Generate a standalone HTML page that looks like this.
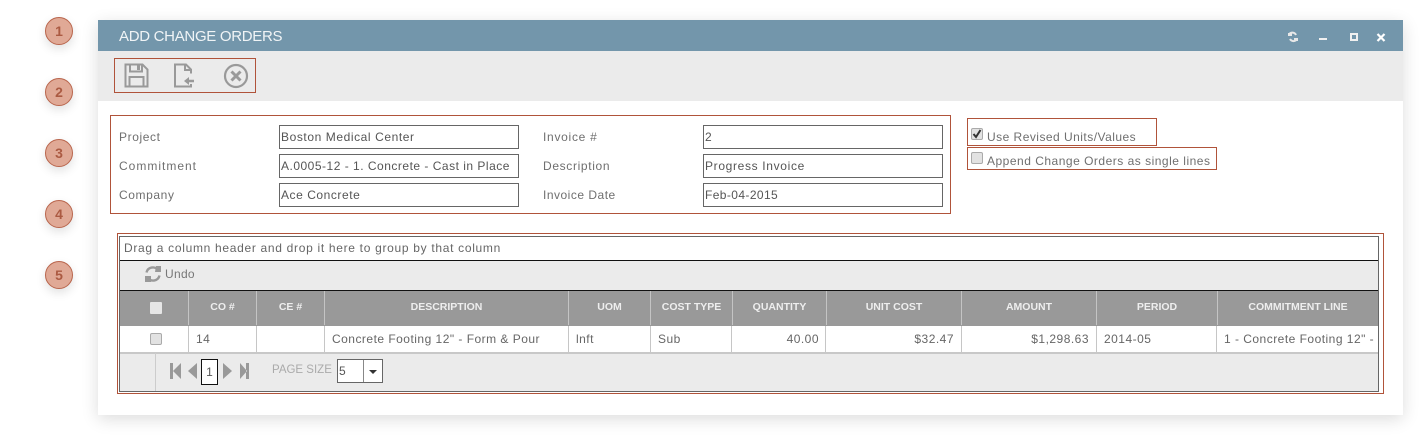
<!DOCTYPE html>
<html><head><meta charset="utf-8"><style>
html,body{margin:0;padding:0;background:#fff;width:1422px;height:438px;overflow:hidden}
body{position:relative;font-family:"Liberation Sans",sans-serif;font-size:12px;color:#666}
.a{position:absolute;box-sizing:border-box}
.t{position:absolute;white-space:nowrap;letter-spacing:.72px;line-height:16px;color:#6f6f6f}
.r{border:1px solid #b0533a}
.n{position:absolute;left:45px;width:28px;height:28px;box-sizing:border-box;border-radius:50%;background:#e0a996;border:1px solid #b9654c;color:#ab5a42;text-align:center;font-size:14px;font-weight:bold;line-height:26px;box-shadow:0 4px 10px rgba(0,0,0,.12)}
.i{position:absolute;box-sizing:border-box;width:240px;height:24px;border:1px solid #666;background:#fff;padding-left:1px;line-height:22px;color:#555;letter-spacing:.55px;white-space:nowrap;overflow:hidden}
.h{position:absolute;top:291px;height:34px;line-height:33px;text-align:center;color:#eee;font-size:10.500px;font-weight:bold;border-left:1px solid #c4c4c4;box-sizing:border-box;letter-spacing:0}
.c{position:absolute;top:326px;height:27px;line-height:26px;border-left:1px solid #c6c6c6;box-sizing:border-box;color:#666;letter-spacing:.48px;padding:0 7px;white-space:nowrap;overflow:hidden}
.cb{position:absolute;width:12px;height:12px;box-sizing:border-box;border:1px solid #aaa;border-radius:2px;background:#e2e2e2}
</style></head><body>
<div class="n" style="top:17px">1</div>
<div class="n" style="top:78px">2</div>
<div class="n" style="top:139px">3</div>
<div class="n" style="top:200px">4</div>
<div class="n" style="top:261px">5</div>

<div class="a" style="left:98px;top:20px;width:1305px;height:395px;background:#fff;box-shadow:0 4px 16px rgba(0,0,0,.14)"></div>
<div class="a" style="left:98px;top:20px;width:1305px;height:31px;background:#7396ab"></div>
<div class="t" style="left:119px;top:29px;font-size:15px;color:#f0f4f6;letter-spacing:-.3px">ADD CHANGE ORDERS</div>
<svg class="a" style="left:1285px;top:28px" width="105" height="16" viewBox="0 0 105 16">
<path d="M4 6.500A4 4 0 0 1 11 7M12 11A4 4 0 0 1 5 11" fill="none" stroke="#e8e8e8" stroke-width="2"/>
<path d="M3 5h4v3h-4zM9 10h4v3h-4z" fill="#e8e8e8"/>
<rect x="34" y="10" width="8" height="2" fill="#f0f0f0"/>
<rect x="66" y="6" width="6" height="6" fill="none" stroke="#f0f0f0" stroke-width="2"/>
<path d="M92.500 6l7 7M99.500 6l-7 7" stroke="#fff" stroke-width="2.200"/>
</svg>

<div class="a" style="left:98px;top:51px;width:1305px;height:50px;background:#ebebeb"></div>
<div class="a r" style="left:114px;top:58px;width:142px;height:35px"></div>
<svg class="a" style="left:114px;top:58px" width="142" height="35" viewBox="0 0 142 35" fill="none" stroke="#999">
<path d="M11.500 6.500h17l5 5v17h-22z" stroke-width="2"/>
<path d="M16 6.500v7h12v-7" stroke-width="2"/><rect x="23" y="7" width="3" height="5" fill="#999" stroke="none"/>
<path d="M15.500 28v-9h14v9" stroke-width="2"/>
<path d="M74 28.500h-13v-22h11l5 5v4M71 7v5h6" stroke-width="2"/>
<path d="M80 23h-7" stroke-width="2.500"/><path d="M75 19l-5 4 5 4z" fill="#999" stroke="none"/>
<path d="M77 26v2.500h-3" stroke-width="2"/>
<circle cx="122" cy="18" r="11" stroke-width="2.200"/>
<path d="M117.500 13.500l9 9M126.500 13.500l-9 9" stroke-width="3"/>
</svg>

<div class="a r" style="left:110px;top:115px;width:841px;height:99px"></div>
<div class="t" style="left:119px;top:129px;letter-spacing:.6px">Project</div>
<div class="t" style="left:119px;top:158px;letter-spacing:1px">Commitment</div>
<div class="t" style="left:119px;top:187px;letter-spacing:.6px">Company</div>
<div class="i" style="left:279px;top:125px;letter-spacing:.58px">Boston Medical Center</div>
<div class="i" style="left:279px;top:154px;letter-spacing:.5px">A.0005-12 - 1. Concrete - Cast in Place</div>
<div class="i" style="left:279px;top:183px">Ace Concrete</div>
<div class="t" style="left:543px;top:129px">Invoice #</div>
<div class="t" style="left:543px;top:158px;letter-spacing:.65px">Description</div>
<div class="t" style="left:543px;top:187px;letter-spacing:.5px">Invoice Date</div>
<div class="i" style="left:703px;top:125px">2</div>
<div class="i" style="left:703px;top:154px;letter-spacing:.66px">Progress Invoice</div>
<div class="i" style="left:703px;top:183px;letter-spacing:.4px">Feb-04-2015</div>

<div class="a r" style="left:967px;top:118px;width:190px;height:28px"></div>
<div class="a r" style="left:967px;top:147px;width:250px;height:23px"></div>
<div class="cb" style="left:971px;top:128px"></div>
<svg class="a" style="left:971px;top:128px" width="12" height="12"><path d="M2.500 6l2.500 3 4.500-7" fill="none" stroke="#333" stroke-width="2"/></svg>
<div class="t" style="left:987px;top:129px;letter-spacing:.47px">Use Revised Units/Values</div>
<div class="cb" style="left:971px;top:152px"></div>
<div class="t" style="left:987px;top:153px;letter-spacing:.5px">Append Change Orders as single lines</div>

<div class="a r" style="left:117px;top:233px;width:1267px;height:161px"></div>
<div class="a" style="left:119px;top:236px;width:1260px;height:156px;border:1px solid #666;background:#fff"></div>
<div class="t" style="left:124px;top:240px;color:#666;letter-spacing:.69px">Drag a column header and drop it here to group by that column</div>
<div class="a" style="left:120px;top:260px;width:1258px;height:1px;background:#111"></div>
<div class="a" style="left:120px;top:261px;width:1258px;height:29px;background:#ebebeb"></div>
<svg class="a" style="left:144px;top:265px" width="18" height="18" viewBox="0 0 18 18" fill="none" stroke="#999" stroke-width="2.400">
<path d="M2.500 7.500A6.500 6.500 0 0 1 14 5M15.500 10.500A6.500 6.500 0 0 1 4 13"/>
<path d="M12 1h5v6h-6zM1 11h6v6H1z" fill="#999" stroke="none"/>
</svg>
<div class="t" style="left:165px;top:266px;letter-spacing:.3px;color:#777">Undo</div>
<div class="a" style="left:120px;top:290px;width:1258px;height:1px;background:#111"></div>
<div class="a" style="left:120px;top:291px;width:1258px;height:35px;background:#999"></div>

<div class="h" style="left:188px;width:68px">CO #</div>
<div class="h" style="left:256px;width:68px">CE #</div>
<div class="h" style="left:324px;width:244px">DESCRIPTION</div>
<div class="h" style="left:568px;width:82px">UOM</div>
<div class="h" style="left:650px;width:82px">COST TYPE</div>
<div class="h" style="left:732px;width:94px">QUANTITY</div>
<div class="h" style="left:826px;width:135px">UNIT COST</div>
<div class="h" style="left:961px;width:135px">AMOUNT</div>
<div class="h" style="left:1096px;width:121px">PERIOD</div>
<div class="h" style="left:1217px;width:161px">COMMITMENT LINE</div>
<div class="a" style="left:150px;top:302px;width:12px;height:12px;background:#e6e6e6;border-radius:1px"></div>

<div class="c" style="left:188px;width:68px">14</div>
<div class="c" style="left:256px;width:68px"></div>
<div class="c" style="left:324px;width:244px">Concrete Footing 12" - Form &amp; Pour</div>
<div class="c" style="left:568px;width:82px">lnft</div>
<div class="c" style="left:650px;width:82px">Sub</div>
<div class="c" style="left:731px;width:95px;text-align:right">40.00</div>
<div class="c" style="left:825px;width:136px;text-align:right">$32.47</div>
<div class="c" style="left:961px;width:135px;text-align:right">$1,298.63</div>
<div class="c" style="left:1096px;width:121px">2014-05</div>
<div class="c" style="left:1216px;width:162px">1 - Concrete Footing 12" -</div>
<div class="cb" style="left:150px;top:333px"></div>

<div class="a" style="left:120px;top:352px;width:1258px;height:39px;background:#ebebeb;border-top:2px solid #c8c8c8"></div>
<div class="a" style="left:155px;top:353px;width:1px;height:38px;background:#ccc"></div>
<svg class="a" style="left:168px;top:362px" width="84" height="18" viewBox="0 0 84 18" fill="#999">
<path d="M2 1h3v16H2zM13 1v16L5 9zM29 1v16L20 9zM55 1v16l9-8zM72 1v16l7-8zM78 1h3v16h-3z"/>
</svg>
<div class="a" style="left:201px;top:359px;width:17px;height:26px;border:1px solid #111;background:#fff;text-align:center;line-height:24px;color:#555">1</div>
<div class="t" style="left:272px;top:362px;font-size:11.500px;letter-spacing:0;color:#aaa">PAGE SIZE</div>
<div class="a" style="left:337px;top:359px;width:46px;height:24px;border:1px solid #666;background:#fff;line-height:22px;padding-left:1px;color:#555">5</div>
<div class="a" style="left:363px;top:360px;width:1px;height:22px;background:#888"></div>
<div class="a" style="left:369px;top:370px;border:4px solid transparent;border-top:4px solid #333;border-bottom:0"></div>
</body></html>
